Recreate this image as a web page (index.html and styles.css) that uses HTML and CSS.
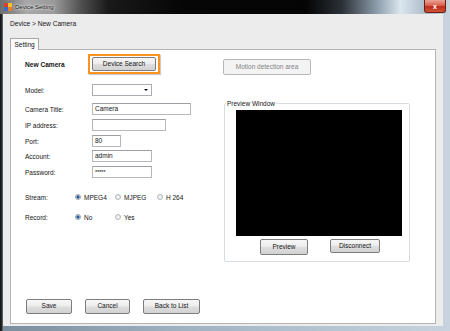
FILE: index.html
```html
<!DOCTYPE html>
<html>
<head>
<meta charset="utf-8">
<link rel="stylesheet" href="styles.css">
</head>
<body>
<div class="window">
  <div class="titlebar">
    <svg class="app-icon" width="8" height="8" viewBox="0 0 8 8">
      <rect x="0" y="0" width="4" height="4" fill="#d8402c"/>
      <rect x="4" y="0" width="4" height="4" fill="#f3c332"/>
      <rect x="0" y="4" width="4" height="4" fill="#3a6ec4"/>
      <rect x="4" y="4" width="4" height="4" fill="#e8822a"/>
    </svg>
    <span class="title">Device Setting</span>
    <div class="close">x</div>
  </div>
  <div class="frame">
    <div class="client">
      <div class="crumb">Device &gt; New Camera</div>
      <div class="tabs"><div class="tab">Setting</div></div>
      <div class="panel">
        <div class="top">
          <div class="form">
            <div class="row row-head">
              <span class="label lbl-head">New Camera</span>
              <div class="highlight"><button class="btn btn-search">Device Search</button></div>
            </div>
            <div class="row row-model">
              <span class="label">Model:</span>
              <div class="combo"><span class="arrow"></span></div>
            </div>
            <div class="row row-title">
              <span class="label">Camera Title:</span>
              <div class="input w-title">Camera</div>
            </div>
            <div class="row row-gap">
              <span class="label">IP address:</span>
              <div class="input w-ip"></div>
            </div>
            <div class="row row-gap">
              <span class="label">Port:</span>
              <div class="input w-port">80</div>
            </div>
            <div class="row row-account">
              <span class="label">Account:</span>
              <div class="input w-acc">admin</div>
            </div>
            <div class="row row-gap">
              <span class="label">Password:</span>
              <div class="input w-acc pw">*****</div>
            </div>
            <div class="row row-stream">
              <span class="label label-short">Stream:</span>
              <div class="radio-item w40"><span class="dot checked"></span>MPEG4</div>
              <div class="radio-item w42"><span class="dot"></span>MJPEG</div>
              <div class="radio-item"><span class="dot"></span>H 264</div>
            </div>
            <div class="row row-record">
              <span class="label label-short">Record:</span>
              <div class="radio-item w40"><span class="dot checked"></span>No</div>
              <div class="radio-item"><span class="dot"></span>Yes</div>
            </div>
          </div>
          <div class="side">
            <button class="btn btn-motion" disabled>Motion detection area</button>
            <div class="group">
              <span class="group-title">Preview Window</span>
              <div class="screen"></div>
              <div class="group-buttons">
                <button class="btn btn-preview">Preview</button>
                <button class="btn btn-disconnect">Disconnect</button>
              </div>
            </div>
          </div>
        </div>
        <div class="actions">
          <button class="btn btn-save">Save</button>
          <button class="btn btn-cancel">Cancel</button>
          <button class="btn btn-back">Back to List</button>
        </div>
      </div>
    </div>
  </div>
</div>
</body>
</html>
```

FILE: styles.css
```css
* { box-sizing: border-box; }

body {
  margin: 0;
  font-family: "Liberation Sans", Arial, sans-serif;
  font-size: 6.5px;
  color: #151515;
  background: #fff;
}

.window {
  width: 450px;
  height: 331px;
  display: flex;
  flex-direction: column;
  overflow: hidden;
}

.titlebar {
  height: 14px;
  flex-shrink: 0;
  display: flex;
  align-items: center;
  padding-left: 4px;
  background: linear-gradient(90deg, #6e6e6e 0%, #a9a9a9 6%, #9a9a9a 12%, #505050 18%, #1a1a1a 24%, #060606 40%, #040404 68%, #2b3138 76%, #8fa0ae 84%, #dbe6ef 89%, #a8b8c5 95%, #c8d3dc 100%);
}

.app-icon {
  width: 8px;
  height: 8px;
  flex-shrink: 0;
}

.title {
  margin-left: 3px;
  font-size: 6px;
  color: #111;
  text-shadow: 0 0 3px #fff, 0 0 2px #fff;
}

.close {
  margin-left: auto;
  margin-right: 4px;
  align-self: flex-start;
  width: 22px;
  height: 13px;
  display: flex;
  align-items: center;
  justify-content: center;
  border: 1px solid #6a2018;
  border-top: none;
  border-radius: 0 0 3px 3px;
  background: linear-gradient(#e9a394 0%, #d8614f 45%, #bd2d1d 55%, #cf5436 100%);
  color: #fff;
  font-weight: bold;
  font-size: 7px;
  line-height: 1;
}

.frame {
  flex: 1;
  display: flex;
  padding: 0 7px 5px 3px;
  background: linear-gradient(90deg, #141414 0, #2c2c2c 2px, #7b8e9d 3px, #9fb2c2 40%, #c7d4df 100%);
}

.client {
  flex: 1;
  display: flex;
  flex-direction: column;
  background: #ececec;
  padding: 6px 7px 2px 7px;
}

.crumb {
  height: 8px;
  line-height: 8px;
  font-size: 6.6px;
}

.tabs {
  margin-top: 10px;
  display: flex;
}

.tab {
  height: 12px;
  padding: 0 3.5px;
  line-height: 11px;
  border: 1px solid #a9a9a9;
  border-bottom: none;
  background: #fbfbfb;
  margin-bottom: -1px;
  position: relative;
  z-index: 1;
}

.panel {
  flex: 1;
  background: #fff;
  border: 1px solid #b4b4b4;
  display: flex;
  flex-direction: column;
  padding: 0 0 9px 14px;
}

.top {
  display: flex;
}

.form {
  width: 198px;
  display: flex;
  flex-direction: column;
}

.row {
  display: flex;
  align-items: center;
  height: 12px;
}

.label {
  width: 67px;
  flex-shrink: 0;
}

.label-short { width: 50px; }

.row-head {
  margin-top: 4px;
  height: 20px;
}

.lbl-head {
  font-weight: bold;
  width: 63px;
  font-size: 6.6px;
}

.highlight {
  border: 2px solid #f7961e;
  padding: 1px 2px;
  box-shadow: 1px 1px 1px rgba(0, 0, 0, 0.2);
}

.btn {
  font-family: "Liberation Sans", Arial, sans-serif;
  font-size: 6.5px;
  color: #151515;
  border: 1px solid #7d7d7d;
  border-radius: 2px;
  background: linear-gradient(#f7f7f7 0%, #ececec 48%, #dedede 52%, #d2d2d2 100%);
  padding: 0;
  margin: 0;
  height: 14px;
  line-height: 1;
}

.btn-search { width: 64px; height: 14px; }

.row-model { margin-top: 10px; }
.row-title { margin-top: 7px; }
.row-gap { margin-top: 4px; }
.row-account { margin-top: 3px; }
.row-stream { margin-top: 13px; }
.row-record { margin-top: 8px; }

.combo {
  width: 60px;
  height: 12px;
  border: 1px solid #abadb3;
  background: #fff;
  display: flex;
  align-items: center;
  justify-content: flex-end;
  padding-right: 3px;
}

.arrow {
  width: 0;
  height: 0;
  border-top: 2px solid #000;
  border-left: 2px solid transparent;
  border-right: 2px solid transparent;
}

.input {
  height: 12px;
  border: 1px solid #b6b8bd;
  border-top-color: #9c9ea3;
  background: #fff;
  padding: 0 2px;
  line-height: 10px;
}

.w-title { width: 99px; }
.w-ip { width: 74px; }
.w-port { width: 29px; }
.w-acc { width: 60px; }
.pw { font-size: 6px; letter-spacing: -0.3px; }

.radio-item {
  display: flex;
  align-items: center;
  gap: 3px;
}

.w40 { width: 40px; }
.w42 { width: 42px; }

.dot {
  width: 6px;
  height: 6px;
  border-radius: 50%;
  border: 1px solid #b4b8bc;
  background: radial-gradient(circle, #f7f8f9 0, #dfe3e6 100%);
}

.dot.checked {
  border-color: #9aa3ab;
  background: radial-gradient(circle, #1f4f8a 0, #2c64a6 1.4px, #dfe5ea 1.8px);
}

.side {
  display: flex;
  flex-direction: column;
  align-items: flex-start;
}

.btn-motion {
  margin-top: 9px;
  width: 88px;
  height: 16px;
  color: #838383;
  border-color: #b4b8bb;
  background: #f3f3f3;
}

.group {
  margin-top: 28px;
  margin-left: 1px;
  width: 186px;
  height: 159px;
  border: 1px solid #d6dce0;
  border-radius: 2px;
  display: flex;
  flex-direction: column;
  align-items: flex-start;
}

.group-title {
  margin: -4px 0 0 1px;
  padding: 0 1px;
  background: #fff;
  line-height: 8px;
  height: 8px;
}

.screen {
  margin: 2px 0 0 11px;
  width: 166px;
  height: 126px;
  background: #000;
}

.group-buttons {
  display: flex;
  align-items: flex-start;
  margin: 3px 0 0 35px;
  gap: 22px;
}

.btn-preview { width: 48px; height: 16px; }
.btn-disconnect { width: 50px; height: 14px; }

.actions {
  margin-top: auto;
  display: flex;
  gap: 13px;
  padding-left: 1px;
}

.btn-save { width: 46px; height: 15px; }
.btn-cancel { width: 45px; height: 15px; }
.btn-back { width: 57px; height: 15px; }
```
